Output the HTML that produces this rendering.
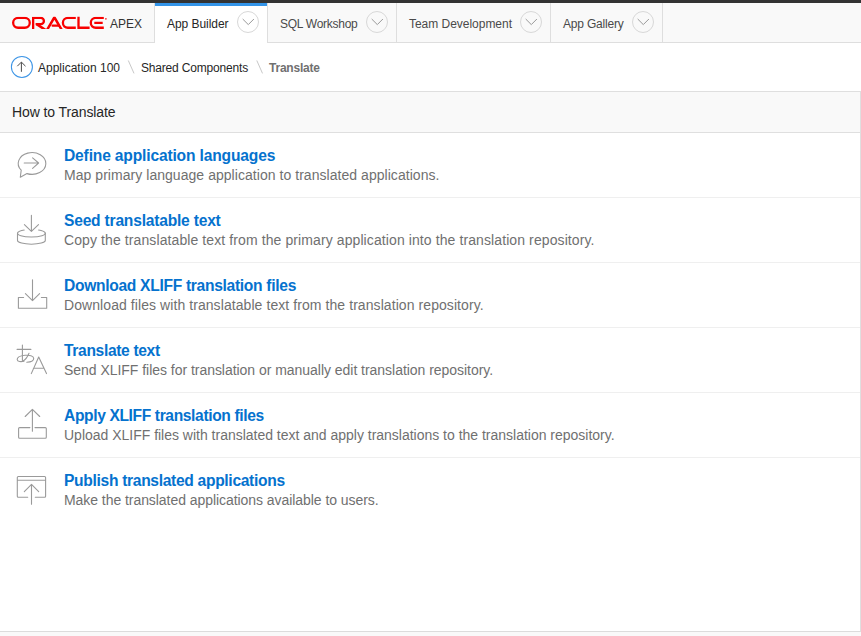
<!DOCTYPE html>
<html><head><meta charset="utf-8">
<style>
html,body{margin:0;padding:0;}
body{width:861px;height:636px;position:relative;overflow:hidden;background:#f9f9f9;font-family:"Liberation Sans",sans-serif;}
.a{position:absolute;white-space:pre;}
#topbar{left:0;top:0;width:861px;height:3px;background:#333;}
#hdr{left:0;top:3px;width:861px;height:39px;background:#f9f9f9;border-bottom:1px solid #dedede;}
.tabsep{position:absolute;top:3px;width:1px;height:39px;background:#dedede;}
.tab{font-size:12px;color:#4a4a4a;line-height:14px;}
.chev{position:absolute;}
#crumb{left:0;top:43px;width:861px;height:48px;background:#fff;}
#region{left:0;top:91px;width:860px;height:539px;background:#fff;border-top:1px solid #dfdfdf;border-right:1px solid #dfdfdf;border-bottom:1px solid #dcdcdc;}
#rhdr{left:0;top:92px;width:860px;height:40px;background:#f9f9f9;border-bottom:1px solid #dfdfdf;}
.sep{position:absolute;left:0;width:860px;height:1px;background:#efefef;}
.ttl{font-size:15.6px;font-weight:bold;color:#0572ce;line-height:18px;left:64px;}
.dsc{font-size:14px;color:#707070;line-height:16px;left:64px;}
svg.ic{position:absolute;left:0;overflow:visible;}
</style></head><body>
<div class="a" id="topbar"></div>
<div class="a" id="hdr"></div>
<!-- logo -->
<svg class="a" style="left:0;top:0" width="160" height="42" viewBox="0 0 160 42">
 <defs><clipPath id="lc"><rect x="0" y="16.8" width="160" height="12.1"/></clipPath></defs>
 <g fill="none" stroke="#f80000" stroke-width="2.3" clip-path="url(#lc)">
  <rect x="13.15" y="17.95" width="16.6" height="9.8" rx="4.9"/>
  <path d="M33.15 30V17.95H40.8a3.1 3.1 0 0 1 0 6.2H35.6"/>
  <path d="M36.6 24.1L45.6 30" stroke-width="2.6"/>
  <path d="M46.3 31.2L54.4 17.3L62.5 31.2" stroke-width="2.5" stroke-linejoin="miter"/>
  <path d="M52.6 25.7H59" stroke-linecap="round" stroke-width="2.2"/>
  <path d="M75.8 17.95H67.8a4.9 4.9 0 0 0 0 9.8H75.8"/>
  <path d="M78.5 16V27.75H89.6"/>
  <path d="M103.8 17.95H95.7a4.9 4.9 0 0 0 0 9.8H103.8M94.3 22.85H102.7"/>
 </g>
 <circle cx="105.9" cy="18.8" r="0.9" fill="#f80000" opacity="0.8"/>
 <text x="110" y="27.8" font-family="Liberation Sans" font-size="12" fill="#333">APEX</text>
</svg>
<div class="tabsep" style="left:154px"></div>
<div class="a" style="left:155px;top:3px;width:112px;height:40px;background:#fff;"></div>
<div class="a" style="left:155px;top:3px;width:112px;height:3px;background:#3394e8;"></div>
<div class="tabsep" style="left:267px"></div>
<div class="tabsep" style="left:396px"></div>
<div class="tabsep" style="left:550px"></div>
<div class="tabsep" style="left:662px"></div>

<div class="a tab" style="left:167px;top:17px;color:#262626;letter-spacing:-0.05px">App Builder</div>
<div class="a tab" style="left:280px;top:17px;letter-spacing:-0.272px">SQL Workshop</div>
<div class="a tab" style="left:409px;top:17px;letter-spacing:-0.027px">Team Development</div>
<div class="a tab" style="left:563px;top:17px;letter-spacing:-0.2px">App Gallery</div>

<svg class="a" style="left:0;top:0" width="861" height="43">
 <g fill="none" stroke="#d8d8d8" stroke-width="1">
  <circle cx="248" cy="22" r="10.5"/>
  <circle cx="377" cy="22" r="10.5"/>
  <circle cx="531" cy="22" r="10.5"/>
  <circle cx="643" cy="22" r="10.5"/>
 </g>
 <g fill="none" stroke="#999" stroke-width="1">
  <path d="M242.7 19L248.3 24.6L253.9 19"/>
  <path d="M371.7 19L377.3 24.6L382.9 19"/>
  <path d="M525.7 19L531.3 24.6L536.9 19"/>
  <path d="M637.7 19L643.3 24.6L648.9 19"/>
 </g>
</svg>

<div class="a" id="crumb"></div>
<svg class="a" style="left:0;top:43px" width="40" height="48" viewBox="0 43 40 48">
 <circle cx="21.9" cy="66.9" r="10.5" fill="none" stroke="#3d95e6" stroke-width="1.05"/>
 <path d="M21.4 62.2V71.8M17.3 66.2L21.4 62.1L25.5 66.2" fill="none" stroke="#4a4a4a" stroke-width="1"/>
</svg>
<div class="a" style="left:38px;top:61px;font-size:12px;line-height:14px;color:#262626;letter-spacing:-0.001px">Application 100</div>
<svg class="a" style="left:120px;top:55px" width="160" height="25" viewBox="120 55 160 25">
 <path d="M128.3 60.5L134 73.4M256.8 60.5L262.5 73.4" stroke="#c8c8c8" stroke-width="1" fill="none"/>
</svg>
<div class="a" style="left:141px;top:61px;font-size:12px;line-height:14px;color:#262626;letter-spacing:-0.181px">Shared Components</div>
<div class="a" style="left:269px;top:61px;font-size:12px;line-height:14px;color:#707070;font-weight:bold;letter-spacing:-0.225px">Translate</div>

<div class="a" id="region"></div>
<div class="a" id="rhdr"></div>
<div class="a" style="left:12px;top:104px;font-size:14px;line-height:16px;color:#262626;letter-spacing:-0.094px">How to Translate</div>

<div class="sep" style="top:197px"></div>
<div class="sep" style="top:262px"></div>
<div class="sep" style="top:327px"></div>
<div class="sep" style="top:392px"></div>
<div class="sep" style="top:457px"></div>

<div class="a ttl" style="top:147px;letter-spacing:-0.164px">Define application languages</div>
<div class="a dsc" style="top:167px;letter-spacing:0.045px">Map primary language application to translated applications.</div>
<div class="a ttl" style="top:212px;letter-spacing:-0.21px">Seed translatable text</div>
<div class="a dsc" style="top:232px;letter-spacing:0.098px">Copy the translatable text from the primary application into the translation repository.</div>
<div class="a ttl" style="top:277px;letter-spacing:-0.303px">Download XLIFF translation files</div>
<div class="a dsc" style="top:297px;letter-spacing:0.074px">Download files with translatable text from the translation repository.</div>
<div class="a ttl" style="top:342px;letter-spacing:-0.339px">Translate text</div>
<div class="a dsc" style="top:362px;letter-spacing:-0.034px">Send XLIFF files for translation or manually edit translation repository.</div>
<div class="a ttl" style="top:407px;letter-spacing:-0.371px">Apply XLIFF translation files</div>
<div class="a dsc" style="top:427px;letter-spacing:-0.01px">Upload XLIFF files with translated text and apply translations to the translation repository.</div>
<div class="a ttl" style="top:472px;letter-spacing:-0.313px">Publish translated applications</div>
<div class="a dsc" style="top:492px;letter-spacing:-0.057px">Make the translated applications available to users.</div>

<svg class="a" style="left:0;top:132px" width="60" height="390" viewBox="0 132 60 390">
 <g fill="none" stroke="#9a9a9a" stroke-width="1.1" stroke-linecap="round" stroke-linejoin="round">
  <!-- speech bubble -->
  <path d="M21.2 170.2A13.8 10.9 0 1 1 27 173.6L20.3 177.2L21.2 170.2Z"/>
  <path d="M24.2 163H38.6M32.6 157.9L38.6 163L32.6 168.3"/>
  <!-- seed -->
  <path d="M31.4 215.3V231.3M24.4 224.6L31.4 231.4L38.5 224.6"/>
  <path d="M24.2 230A13.9 3.8 0 1 0 38.6 230"/>
  <path d="M17.5 233.2V240.4A13.9 3.8 0 0 0 45.3 240.4V233.2"/>
  <!-- download -->
  <path d="M32.5 279.8V300.6M25.4 293.6L32.5 300.6L39.6 293.6"/>
  <path d="M23.6 297.5H18.4V308.3H46.7V297.5H41.4"/>
  <!-- translate -->
  <path d="M17.1 349.4H30.9M22.4 345V360.6"/>
  <path d="M29 353.2C27.5 357 25.3 359.8 22.6 361.2"/>
  <path d="M26.8 362.3C31 362.1 33.8 360.5 33.7 358.3C33.5 355.9 29.5 354.9 25 355.3C20 355.8 17 357.7 17.2 359.8C17.4 361.7 21 362.1 24 361.2"/>
  <path d="M31.3 373.6L38.7 357L46.5 373.6M33.4 368.3H43.9"/>
  <!-- apply / upload -->
  <path d="M32.4 409.5V431.2M25.2 416.5L32.4 409.3L39.7 416.5"/>
  <path d="M29.9 427.6H19.6a1 1 0 0 0-1 1V437.2a1 1 0 0 0 1 1H45.3a1 1 0 0 0 1-1V428.6a1 1 0 0 0-1-1H35"/>
  <!-- publish -->
  <path d="M27.7 497.2H18.3a1 1 0 0 1-1-1V477.5a1 1 0 0 1 1-1H44.6a1 1 0 0 1 1 1V496.2a1 1 0 0 1-1 1H35.3M17.3 480.3H45.6"/>
  <path d="M31.5 484.6V504.2M24.3 491.6L31.5 484.4L38.7 491.6"/>
 </g>
</svg>
</body></html>
